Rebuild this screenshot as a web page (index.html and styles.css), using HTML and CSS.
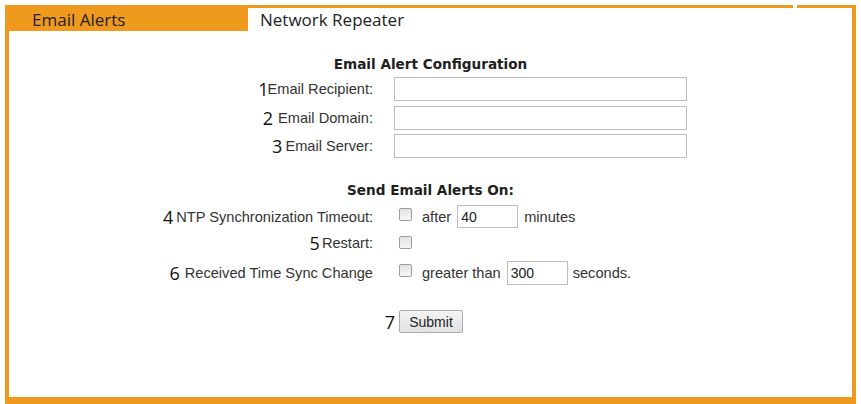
FILE: index.html
```html
<!DOCTYPE html>
<html lang="en">
<head>
<meta charset="utf-8">
<title>Email Alerts</title>
<link rel="stylesheet" href="styles.css">
</head>
<body>
<div class="frame">
  <div class="tabs">
    <div class="tab tab-active">Email Alerts</div>
    <div class="tab tab-plain">Network Repeater</div>
    <div class="tab-gap"></div>
    <div class="tab-end"></div>
  </div>
  <div class="panel">
    <form class="form">
      <div class="heading heading-first">Email Alert Configuration</div>

      <div class="row row-text row-1">
        <label class="lbl"><span class="num num-1">1</span>Email Recipient:</label>
        <div class="ctl"><input class="txt" type="text"></div>
      </div>
      <div class="row row-text row-2">
        <label class="lbl"><span class="num num-2">2</span>Email Domain:</label>
        <div class="ctl"><input class="txt" type="text"></div>
      </div>
      <div class="row row-text row-3">
        <label class="lbl"><span class="num num-3">3</span>Email Server:</label>
        <div class="ctl"><input class="txt" type="text"></div>
      </div>

      <div class="heading heading-second">Send Email Alerts On:</div>

      <div class="row row-ntp">
        <label class="lbl"><span class="num num-4">4</span>NTP Synchronization Timeout:</label>
        <div class="ctl"><input class="chk" type="checkbox"><span class="word">after</span><input class="small small-ntp" type="text" value="40"><span class="word word-after">minutes</span></div>
      </div>
      <div class="row row-restart">
        <label class="lbl"><span class="num num-5">5</span>Restart:</label>
        <div class="ctl"><input class="chk chk-restart" type="checkbox"></div>
      </div>
      <div class="row row-sync">
        <label class="lbl"><span class="num num-6">6</span>Received Time Sync Change</label>
        <div class="ctl"><input class="chk" type="checkbox"><span class="word">greater than</span><input class="small small-sync" type="text" value="300"><span class="word word-after-sync">seconds.</span></div>
      </div>

      <div class="row row-submit">
        <div class="lbl lbl-submit"><span class="num num-7">7</span></div>
        <div class="ctl"><button class="btn" type="button">Submit</button></div>
      </div>
    </form>
  </div>
</div>
</body>
</html>
```
FILE: styles.css
```css
html, body {
  margin: 0;
  padding: 0;
  background: #ffffff;
}

body {
  font-family: "Liberation Sans", Arial, sans-serif;
  font-size: 14px;
  color: #333333;
}

.frame {
  box-sizing: border-box;
  height: 399px;
  margin: 5px 5px 0 5px;
  border-left: 4px solid #ef991f;
  border-right: 4px solid #ef991f;
  border-bottom: 7px solid #ef991f;
  display: flex;
  flex-direction: column;
}

.tabs {
  display: flex;
  height: 26px;
  font-family: "Open Sans", "Noto Sans", sans-serif;
  font-size: 17px;
  color: #222222;
}

.tab {
  box-sizing: border-box;
  height: 26px;
  line-height: 23px;
  white-space: nowrap;
}

.tab-active {
  width: 239px;
  background: #ef991f;
  padding: 3px 0 0 23px;
}

.tab-plain {
  flex: 1;
  border-top: 3px solid #ef991f;
  padding-left: 12px;
}

.tab-gap {
  width: 4px;
}

.tab-end {
  width: 55px;
  border-top: 3px solid #ef991f;
}

.panel {
  flex: 1;
  background: #ffffff;
  padding-top: 23px;
}

.heading {
  text-align: center;
  font-family: "DejaVu Sans", Verdana, sans-serif;
  font-weight: bold;
  font-size: 13.6px;
  line-height: 20px;
  color: #1e1e1e;
}

.heading-second {
  margin-top: 22px;
}

.row {
  display: grid;
  grid-template-columns: 210px 304px;
  column-gap: 21px;
  justify-content: center;
  align-items: baseline;
}

.row-1 { margin-top: 3px; }
.row-2 { margin-top: 5px; }
.row-3 { margin-top: 4px; }
.row-ntp { margin-top: 5px; }
.row-restart { margin-top: 6px; }
.row-sync { margin-top: 9px; }
.row-submit { margin-top: 25px; }

.lbl {
  text-align: right;
  line-height: 16px;
  white-space: nowrap;
  font-size: 14.6px;
  color: #333333;
}

.lbl-submit {
  margin-right: -22px;
}

.num {
  font-family: "Open Sans", "Noto Sans", sans-serif;
  font-size: 18px;
  line-height: 1;
  color: #111111;
  vertical-align: -2px;
}

.num-1 { margin-right: -1px; }
.num-2 { margin-right: 5px; }
.num-3 { margin-right: 3px; }
.num-4 { margin-right: 3px; }
.num-5 { margin-right: 2px; }
.num-6 { margin-right: 5px; }

.ctl {
  line-height: 16px;
  white-space: nowrap;
  color: #333333;
}

.txt {
  box-sizing: border-box;
  width: 293px;
  height: 24px;
  margin: 0;
  padding: 0 3px;
  border: 1px solid #bdbdbd;
  background: #ffffff;
  font: 14px "Liberation Sans", Arial, sans-serif;
  color: #222222;
  vertical-align: baseline;
}

.chk {
  -webkit-appearance: none;
  appearance: none;
  box-sizing: border-box;
  width: 13px;
  height: 13px;
  margin: 0 10px 1px 5px;
  border: 1px solid #9c9c9c;
  border-radius: 2px;
  background: linear-gradient(#e2e2e2, #f7f7f7);
  vertical-align: baseline;
}

.chk-restart {
  margin-bottom: -1px;
}

.word {
  font-size: 14.6px;
  color: #333333;
}

.small {
  box-sizing: border-box;
  width: 61px;
  margin: 0 0 0 6px;
  padding: 0 3px;
  border: 1px solid #bdbdbd;
  background: #ffffff;
  font: 14px "Liberation Sans", Arial, sans-serif;
  color: #222222;
  vertical-align: baseline;
}

.small-ntp {
  height: 23px;
}

.small-sync {
  height: 24px;
  margin-left: 6px;
}

.word-after {
  margin-left: 6px;
}

.word-after-sync {
  margin-left: 5px;
}

.btn {
  box-sizing: border-box;
  width: 64px;
  height: 23px;
  margin: 0 0 0 5px;
  padding: 0;
  border: 1px solid #acacac;
  border-radius: 2px;
  background: linear-gradient(#f3f3f3, #e2e2e2);
  font: 14px "Liberation Sans", Arial, sans-serif;
  color: #222222;
  vertical-align: baseline;
}
```
